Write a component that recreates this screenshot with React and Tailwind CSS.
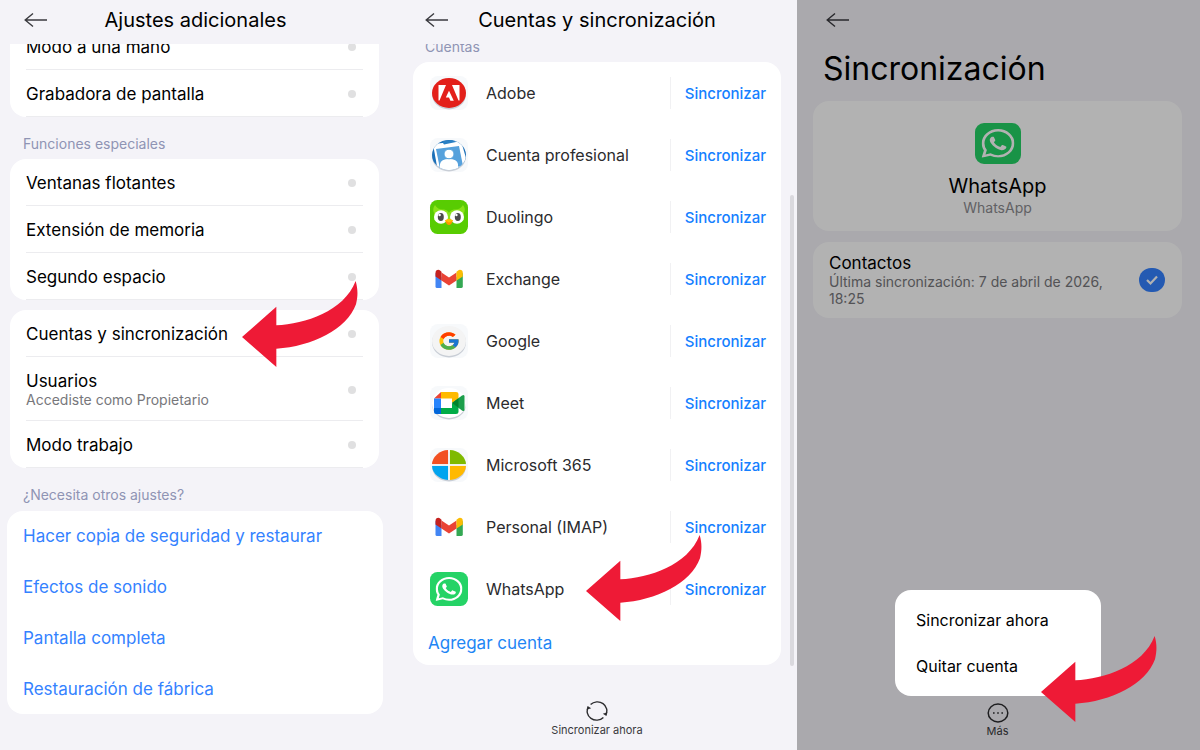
import React from 'react';
import { FcGoogle } from 'react-icons/fc';
import { SiWhatsapp } from 'react-icons/si';

const BackButton = () => (
  <button type="button" aria-label="Atrás" className="flex h-5 w-6 shrink-0 items-center">
    <svg viewBox="0 0 24 16" className="h-4 w-6" fill="none" stroke="#3a3a3f" strokeWidth="1.4">
      <path d="M9 1.5 1.2 8 9 14.5M1.2 8H23" />
    </svg>
  </button>
);

const RedArrow = ({ className }) => (
  <svg viewBox="0 0 348 258" className={`absolute h-[86px] w-[116px] ${className}`} fill="#ee1a36" aria-hidden="true">
    <path d="M0 168 103 77V133C190 128 305 92 341 0C348 25 348 45 342 70C315 145 210 197 103 203V258Z" />
  </svg>
);

const AppIcon = ({ children }) => (
  <svg viewBox="0 0 38 34" className="h-[34px] w-[38px] shrink-0 overflow-visible" aria-hidden="true">
    {children}
  </svg>
);

const RoundShadow = () => (
  <>
    <rect width="38" height="34" rx="8" fill="#f7f9fb" />
    <ellipse cx="19" cy="18.4" rx="17" ry="15" fill="#c9ced6" />
  </>
);

const AdobeIcon = () => (
  <AppIcon>
    <RoundShadow />
    <ellipse cx="19" cy="17" rx="17" ry="15" fill="#e3201b" />
    <path d="M8.5 9H16L9.5 24.5H8.5ZM22 9H29.5V24.5H28.5ZM19 14.8 23.8 24.8H20.4L19 21.5H15.8Z" fill="#fff" />
  </AppIcon>
);

const WorkIcon = () => (
  <AppIcon>
    <RoundShadow />
    <clipPath id="work-clip">
      <ellipse cx="19" cy="17" rx="17" ry="15" />
    </clipPath>
    <g clipPath="url(#work-clip)">
      <rect width="38" height="34" fill="#1a6fb8" />
      <path d="M3 6 31 3 36 20 33 34H8Z" fill="#fff" />
      <path d="M12 3.5 22 2 26 4 14 6.5Z" fill="#2a80c4" />
      <path d="M6 11 29 8 33 28 10 31Z" fill="#56a1dc" />
      <path d="M10 34V26Q11 21 19 21T28 26V34Z" fill="#fff" />
      <ellipse cx="19" cy="16" rx="5" ry="4.8" fill="#fff" stroke="#56a1dc" strokeWidth="1" />
    </g>
  </AppIcon>
);

const DuolingoIcon = () => (
  <AppIcon>
    <rect width="38" height="34" rx="7.5" fill="#58cc02" />
    <path d="M5 5Q8 10 14 9.5Q18 10 19 13Q20 10 24 9.5Q30 10 33 5Q36 9 34 13V20H4V13Q2 9 5 5Z" fill="#89e219" />
    <ellipse cx="11" cy="17" rx="7" ry="6.8" fill="#fff" />
    <ellipse cx="27" cy="17" rx="7" ry="6.8" fill="#fff" />
    <ellipse cx="10.8" cy="17" rx="3" ry="4" fill="#4b4b4b" />
    <ellipse cx="27.8" cy="17" rx="3" ry="4" fill="#4b4b4b" />
    <circle cx="9.6" cy="15" r="1.2" fill="#fff" />
    <circle cx="26.4" cy="15" r="1.2" fill="#fff" />
    <path d="M15 20.5Q19 17.5 23 20.5L21.5 23.5Q19 26.5 16.5 23.5Z" fill="#ff9600" />
    <path d="M15 20.5Q19 17.5 23 20.5L19 22.5Z" fill="#ffc200" />
  </AppIcon>
);

const GmailIcon = () => (
  <AppIcon>
    <path d="M5.5 11V24.5Q5.5 26 7 26H11.5V15Z" fill="#4285f4" />
    <path d="M26.5 15V26H31Q32.8 26 32.8 24.5V11Z" fill="#34a853" />
    <path d="M11.5 18.5V10.5L19 15.5 26.5 10.5V18.5L19 23.5Z" fill="#ea4335" />
    <path d="M5.5 14.5V11Q5.5 7.8 8.5 7.8 9.5 7.8 11.5 9.8V18.5Z" fill="#c5221f" />
    <path d="M32.8 14.5V11Q32.8 7.8 29.8 7.8 28.8 7.8 26.5 9.8V18.5Z" fill="#fbbc04" />
  </AppIcon>
);

const GoogleIcon = () => (
  <AppIcon>
    <RoundShadow />
    <ellipse cx="19" cy="17" rx="17" ry="15" fill="#f4f4f4" />
    <g transform="translate(7.5 6.5) scale(0.96 0.88)">
      <FcGoogle size={24} />
    </g>
  </AppIcon>
);

const MeetIcon = () => (
  <AppIcon>
    <RoundShadow />
    <ellipse cx="19" cy="17" rx="17" ry="15" fill="#fff" />
    <path d="M11 6V12.5H4Z" fill="#ea4335" />
    <path d="M4 12.5H11V22H4Z" fill="#2684fc" />
    <path d="M4 22H11V28H6Q4 28 4 26Z" fill="#0066da" />
    <path d="M11 6H26Q28.5 6 28.5 8V13.5L22 17V12.5H11Z" fill="#ffba00" />
    <path d="M11 28V22H22V17L28.5 20.5V26Q28.5 28 26 28Z" fill="#00ac47" />
    <path d="M22 17 32 9.5Q34.5 8 34.5 10.5V23.5Q34.5 26 32 24.5Z" fill="#1b9e4b" />
    <path d="M22 17 28.5 12.2V21.8Z" fill="#00832d" />
  </AppIcon>
);

const MicrosoftIcon = () => (
  <AppIcon>
    <RoundShadow />
    <path d="M18.2 16.3V2A17 15 0 0 0 2 16.3Z" fill="#f25022" />
    <path d="M19.8 16.3V2A17 15 0 0 1 36 16.3Z" fill="#7fba00" />
    <path d="M18.2 17.7V32A17 15 0 0 1 2 17.7Z" fill="#00a4ef" />
    <path d="M19.8 17.7V32A17 15 0 0 0 36 17.7Z" fill="#ffb900" />
    <path d="M2 17H36M19 2V32" stroke="#fff" strokeWidth="1.5" />
  </AppIcon>
);

const WhatsAppIcon = () => (
  <AppIcon>
    <rect width="38" height="34" rx="7.5" fill="#25d366" />
    <g transform="translate(5.5 5) scale(1.125 1)">
      <SiWhatsapp size={24} color="#fff" />
    </g>
  </AppIcon>
);

const accounts = [
  { name: 'Adobe', Icon: AdobeIcon },
  { name: 'Cuenta profesional', Icon: WorkIcon },
  { name: 'Duolingo', Icon: DuolingoIcon },
  { name: 'Exchange', Icon: GmailIcon },
  { name: 'Google', Icon: GoogleIcon },
  { name: 'Meet', Icon: MeetIcon },
  { name: 'Microsoft 365', Icon: MicrosoftIcon },
  { name: 'Personal (IMAP)', Icon: GmailIcon },
  { name: 'WhatsApp', Icon: WhatsAppIcon },
];

const otherSettings = [
  'Hacer copia de seguridad y restaurar',
  'Efectos de sonido',
  'Pantalla completa',
  'Restauración de fábrica',
];

const SettingRow = ({ title, detail }) => (
  <li className="border-b border-[#ececef]">
    <button type="button" className={`flex w-full items-center justify-between pt-[2px] pr-[7px] text-left ${detail ? 'h-[63px]' : 'h-[46px]'}`}>
      <span className="flex flex-col">
        <span className="text-[17px] leading-5">{title}</span>
        {detail && <span className="text-sm leading-[18px] text-[#77777b]">{detail}</span>}
      </span>
      <span className="size-2 rounded-full bg-[#e0e0e1]" />
    </button>
  </li>
);

const SettingsCard = ({ rows, className = '' }) => (
  <ul className={`rounded-2xl bg-white px-4 ${className}`}>
    {rows.map((row) => (
      <SettingRow key={row.title} {...row} />
    ))}
  </ul>
);

const AdditionalSettings = () => (
  <section className="relative pr-[18px] pl-[10px]">
    <header className="flex h-11 items-center pb-1 pl-[14px]">
      <BackButton />
      <h1 className="flex-1 pr-9 text-center text-[20px] leading-6">Ajustes adicionales</h1>
    </header>
    <div className="overflow-hidden">
      <SettingsCard className="-mt-[21px]" rows={[{ title: 'Modo a una mano' }, { title: 'Grabadora de pantalla' }]} />
    </div>
    <h2 className="px-[13px] pt-[17px] pb-[5px] text-sm leading-5 text-[#8f94b4]">Funciones especiales</h2>
    <SettingsCard
      rows={[{ title: 'Ventanas flotantes' }, { title: 'Extensión de memoria' }, { title: 'Segundo espacio' }]}
    />
    <SettingsCard
      className="mt-[10px]"
      rows={[
        { title: 'Cuentas y sincronización' },
        { title: 'Usuarios', detail: 'Accediste como Propietario' },
        { title: 'Modo trabajo' },
      ]}
    />
    <h2 className="px-[13px] pt-[17px] pb-[6px] text-sm leading-5 text-[#8f94b4]">¿Necesita otros ajustes?</h2>
    <ul className="-mr-[4px] -ml-[3px] flex flex-col gap-px rounded-2xl bg-white px-4">
      {otherSettings.map((item) => (
        <li key={item}>
          <a href="#" className="flex h-[50px] items-center text-[17px] leading-5 text-[#3482ff]">
            {item}
          </a>
        </li>
      ))}
    </ul>
    <RedArrow className="top-[281px] left-[242px]" />
  </section>
);

const SyncAccounts = () => (
  <section className="relative flex flex-col px-4">
    <header className="flex h-11 items-center pb-1 pl-3">
      <BackButton />
      <h1 className="flex-1 pr-9 text-center text-[20px] leading-6">Cuentas y sincronización</h1>
    </header>
    <div className="overflow-hidden">
      <h2 className="-mt-[7px] px-3 pb-[5px] text-sm leading-5 text-[#8f94b4]">Cuentas</h2>
    </div>
    <div className="rounded-2xl bg-white">
      <ul>
        {accounts.map(({ name, Icon }) => (
          <li key={name} className="flex h-[62px] items-center pr-[15px] pl-[17px]">
            <Icon />
            <span className="flex-1 pl-[18px] text-base leading-5 text-[#2b2b2e]">{name}</span>
            <button type="button" className="h-8 border-l border-[#f1f1f3] pt-px pl-[14px] text-[15px] font-medium leading-5 text-[#1580ff]">
              Sincronizar
            </button>
          </li>
        ))}
      </ul>
      <button type="button" className="block h-[45px] w-full px-[15px] text-left text-[17px] leading-5 text-[#1f86f5]">
        Agregar cuenta
      </button>
    </div>
    <button type="button" className="mt-9 flex flex-col items-center gap-px self-center">
      <svg viewBox="0 0 22 20" className="h-5 w-[22px]" fill="none" stroke="#2c2c2f" strokeWidth="1.4">
        <path d="M4.6 3.6A9.4 8.8 0 0 1 19.6 14M17.4 16.4A9.4 8.8 0 0 1 2.4 6" />
        <path d="M0.6 8.8 1.6 5 5.2 7.2ZM21.4 11.2 20.4 15 16.8 12.8Z" fill="#2c2c2f" stroke="none" />
      </svg>
      <span className="text-[11px] leading-4 text-[#3a3a3e]">Sincronizar ahora</span>
    </button>
    <div className="absolute top-[195px] right-[3px] h-[471px] w-1 rounded-full bg-[#dad9de]" />
    <RedArrow className="top-[535px] left-[189px]" />
  </section>
);

const AccountSync = () => (
  <section className="relative flex flex-col pr-[18px] pl-4">
    <header className="flex h-11 items-center pb-1 pl-[13px]">
      <BackButton />
    </header>
    <h1 className="px-[10px] pt-1 text-[32px] leading-[42px]">Sincronización</h1>
    <div className="mt-[11px] flex flex-col items-center rounded-2xl bg-white pt-[22px] pb-[13px]">
      <svg viewBox="0 0 46 41" className="h-[41px] w-[46px]" aria-hidden="true">
        <rect width="46" height="41" rx="9" fill="#25d366" />
        <g transform="translate(6.5 6) scale(1.375 1.2)">
          <SiWhatsapp size={24} color="#fff" />
        </g>
      </svg>
      <p className="mt-[10px] text-[20px] leading-6">WhatsApp</p>
      <p className="text-sm leading-5 text-[#8c8c90]">WhatsApp</p>
    </div>
    <label className="mt-[11px] flex h-[76px] items-center justify-between rounded-2xl bg-white pr-[17px] pl-4">
      <span className="flex max-w-[290px] flex-col">
        <span className="text-[17px] leading-5">Contactos</span>
        <span className="text-sm leading-[17px] text-[#77777b]">Última sincronización: 7 de abril de 2026, 18:25</span>
      </span>
      <span className="grid shrink-0 place-items-center">
        <input
          type="checkbox"
          defaultChecked
          className="col-start-1 row-start-1 h-6 w-[26px] appearance-none rounded-full bg-[#3482ff]"
        />
        <svg viewBox="0 0 14 12" className="pointer-events-none col-start-1 row-start-1 h-3 w-[14px]" fill="none" stroke="#fff" strokeWidth="2.2">
          <path d="M2 6 5.5 9.5 12 2.5" />
        </svg>
      </span>
    </label>
    <button type="button" className="mt-auto mb-[11px] flex flex-col items-center self-center">
      <svg viewBox="0 0 22 20" className="h-5 w-[22px]" fill="none" stroke="#2c2c2f" strokeWidth="1.5">
        <ellipse cx="11" cy="10" rx="9.8" ry="8.9" />
        <path d="M6 10H7.6M10.2 10H11.8M14.4 10H16" />
      </svg>
      <span className="text-[11px] leading-4 text-[#3a3a3e]">Más</span>
    </button>
    <div className="absolute inset-0 bg-black/30" />
    <div role="menu" className="absolute bottom-[54px] left-[98px] flex w-[206px] flex-col rounded-2xl bg-white py-[7px]">
      <button type="button" role="menuitem" className="h-[46px] px-[21px] text-left text-base leading-5">
        Sincronizar ahora
      </button>
      <button type="button" role="menuitem" className="h-[46px] px-[21px] text-left text-base leading-5">
        Quitar cuenta
      </button>
    </div>
    <RedArrow className="bottom-[28px] left-[244px]" />
  </section>
);

export default function App() {
  return (
    <main className="grid min-h-screen grid-cols-[397fr_400fr_403fr] bg-[#f4f3f8] font-['Inter',sans-serif] text-black">
      <AdditionalSettings />
      <SyncAccounts />
      <AccountSync />
    </main>
  );
}
